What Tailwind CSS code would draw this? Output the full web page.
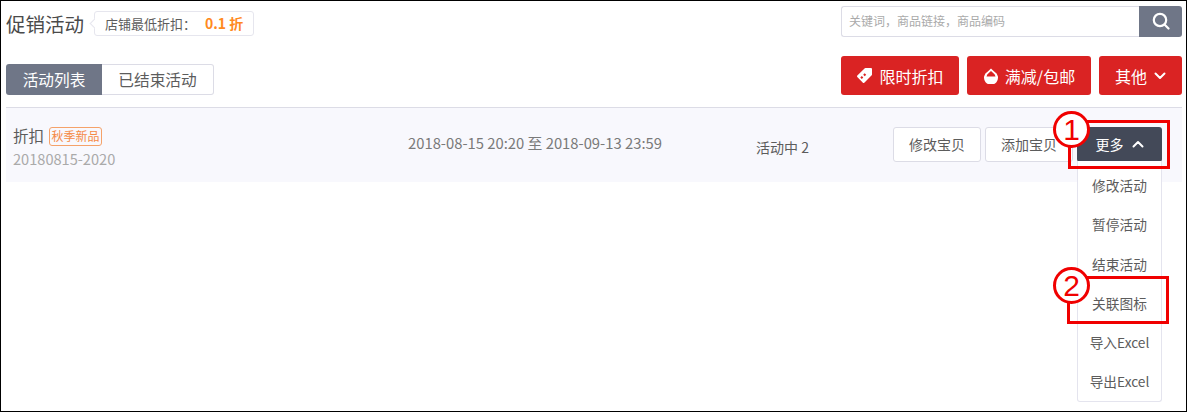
<!DOCTYPE html>
<html lang="zh">
  <head>
    <meta charset="UTF-8" />
    <title>促销活动</title>
    <script src="https://cdn.jsdelivr.net/npm/@tailwindcss/browser@4"></script>
  </head>
  <body class="bg-white font-['Noto_Sans_CJK_SC','Noto_Sans',sans-serif] text-[#5c5c5c]">
    <div class="relative w-[1187px] h-[412px] overflow-hidden border border-black pl-[5px] pr-[4px] pt-[4px]">
      <!-- Title row -->
      <div class="flex items-center justify-between h-[32px]">
        <div class="flex items-center">
          <h1 class="mt-[5px] text-[19.5px] text-[#4a4a4a] leading-none">促销活动</h1>
          <div class="relative ml-[10px] mt-[5px] flex items-center h-[25px] w-[160px] pl-[10px] border border-[#e6e6ee] rounded-[3px] text-[13px]">
            <span class="absolute -left-[4px] top-[8px] w-[7px] h-[7px] rotate-45 bg-white border-l border-b border-[#e6e6ee]"></span>
            <span class="whitespace-nowrap">店铺最低折扣：</span>
            <span class="ml-[9px] text-[14px] font-bold text-[#ff8a1f] whitespace-nowrap">0.1 折</span>
          </div>
        </div>
        <div class="flex w-[341px] h-[31px]">
          <input
            type="text"
            placeholder="关键词，商品链接，商品编码"
            class="flex-1 min-w-0 px-[7px] border border-r-0 border-[#dcdce6] rounded-l-[3px] text-[12px] placeholder:text-[#aaa]"
          />
          <button class="w-[43px] flex items-center justify-center bg-[#6f7687] rounded-r-[3px]">
            <svg class="w-[18px] h-[18px]" fill="none" stroke="white" stroke-width="2.2" viewBox="0 0 18 18">
              <circle cx="8" cy="8" r="6.2"></circle>
              <path d="M12.5 12.5L16.5 16.5" stroke-linecap="round"></path>
            </svg>
          </button>
        </div>
      </div>

      <!-- Tabs and actions -->
      <div class="flex items-end justify-between mt-[19px] h-[39px]">
        <div class="flex h-[31px] text-[15.7px]">
          <a class="w-[96px] flex items-center justify-center bg-[#6f7687] text-white rounded-l-[3px]">活动列表</a>
          <a class="w-[112px] flex items-center justify-center border border-l-0 border-[#dcdce6] rounded-r-[3px]">已结束活动</a>
        </div>
        <div class="flex gap-[8px] h-[39px] text-white text-[16px]">
          <button class="w-[118px] flex items-center justify-center gap-[6px] bg-[#da2323] rounded-[3px]">
            <svg class="w-[17px] h-[17px]" viewBox="0 0 17 17" fill="white">
              <path fill-rule="evenodd" d="M9.5 1H15a1 1 0 0 1 1 1v5.5a1 1 0 0 1-.3.7l-7.4 7.5a1 1 0 0 1-1.4 0L1.3 10a1 1 0 0 1 0-1.4L8.8 1.3A1 1 0 0 1 9.5 1zM8.7 6.2L7.2 7.700l1.500 1.500 1.500-1.500zM5.800 9.100l-1.500 1.500 1.500 1.500 1.500-1.500z"></path>
            </svg>
            <span>限时折扣</span>
          </button>
          <button class="w-[124px] flex items-center justify-center gap-[6px] bg-[#da2323] rounded-[3px]">
            <svg class="w-[16px] h-[16px]" viewBox="0 0 16 16" fill="white">
              <path fill-rule="evenodd" d="M8 .5l3.200 3A7 7 0 1 1 4.800 3.500zM8 3L5.800 5.100A4.800 4.800 0 0 0 3.500 8.400h9A4.800 4.800 0 0 0 10.200 5.100z"></path>
            </svg>
            <span>满减/包邮</span>
          </button>
          <button class="w-[83px] flex items-center justify-center gap-[7px] bg-[#da2323] rounded-[3px]">
            <span>其他</span>
            <svg class="w-[12px] h-[8px]" viewBox="0 0 12 8" fill="none" stroke="white" stroke-width="2" stroke-linecap="round" stroke-linejoin="round">
              <path d="M1.500 1.500L6 6l4.500-4.500"></path>
            </svg>
          </button>
        </div>
      </div>

      <!-- Activity row -->
      <div class="mt-[12px] w-[1176px] h-[75px] border-t border-[#dcdce6] bg-[#f8f8fd] flex items-center">
        <div class="w-[402px] pl-[7px] mt-[5px]">
          <div class="flex items-center gap-[4px] h-[20px] text-[15.500px]">
            <span>折扣</span>
            <span class="ml-[1px] w-[53px] h-[19px] flex items-center justify-center border border-[#f5a26a] rounded-[3px] text-[12px] text-[#f58a45] whitespace-nowrap">秋季新品</span>
          </div>
          <div class="mt-[3px] text-[14.600px] leading-[20px] text-[#aaa]">20180815-2020</div>
        </div>
        <div class="w-[348px] mb-[4px] text-[14.800px] text-[#7a7a7a]">2018-08-15 20:20 至 2018-09-13 23:59</div>
        <div class="w-[137px] mt-[4px] text-[14px]">活动中 2</div>
        <div class="flex gap-[4px] mb-[2px] text-[14px]">
          <button class="w-[88px] h-[35px] flex items-center justify-center bg-white border border-[#dcdce6] rounded-[3px]">修改宝贝</button>
          <button class="w-[88px] h-[35px] flex items-center justify-center bg-white border border-[#dcdce6] rounded-[3px]">添加宝贝</button>
          <button class="w-[85px] h-[35px] flex items-center justify-center gap-[8px] bg-[#434958] text-white rounded-[3px]">
            <span>更多</span>
            <svg class="w-[12px] h-[8px]" viewBox="0 0 12 8" fill="none" stroke="white" stroke-width="2" stroke-linecap="round" stroke-linejoin="round">
              <path d="M1.500 6.500L6 2l4.500 4.500"></path>
            </svg>
          </button>
        </div>
      </div>

      <!-- Dropdown menu -->
      <div class="absolute left-[1076px] top-[160px] w-[85px] h-[241px] pt-[5px] bg-white border border-t-0 border-[#e4e4ee] rounded-b-[3px] flex flex-col text-[13.700px]">
        <a class="h-[39.400px] flex items-center justify-center">修改活动</a>
        <a class="h-[39.400px] flex items-center justify-center">暂停活动</a>
        <a class="h-[39.400px] flex items-center justify-center">结束活动</a>
        <a class="h-[39.400px] flex items-center justify-center">关联图标</a>
        <a class="h-[39.400px] flex items-center justify-center">导入Excel</a>
        <a class="h-[39.400px] flex items-center justify-center">导出Excel</a>
      </div>

      <!-- Annotations -->
      <div class="absolute left-[1067px] top-[119px] w-[102px] h-[49px] border-[3px] border-[#f00000]"></div>
      <div class="absolute left-[1066px] top-[275px] w-[102px] h-[48px] border-[3px] border-[#f00000]"></div>
      <div class="absolute left-[1052px] top-[110px] w-[37px] h-[37px] flex items-center justify-center rounded-full bg-white border-[3px] border-[#f00000] text-[30px] leading-none text-[#f00000] font-['Liberation_Sans',sans-serif]">1</div>
      <div class="absolute left-[1052px] top-[266px] w-[37px] h-[37px] flex items-center justify-center rounded-full bg-white border-[3px] border-[#f00000] text-[30px] leading-none text-[#f00000] font-['Liberation_Sans',sans-serif]">2</div>
    </div>
  </body>
</html>
